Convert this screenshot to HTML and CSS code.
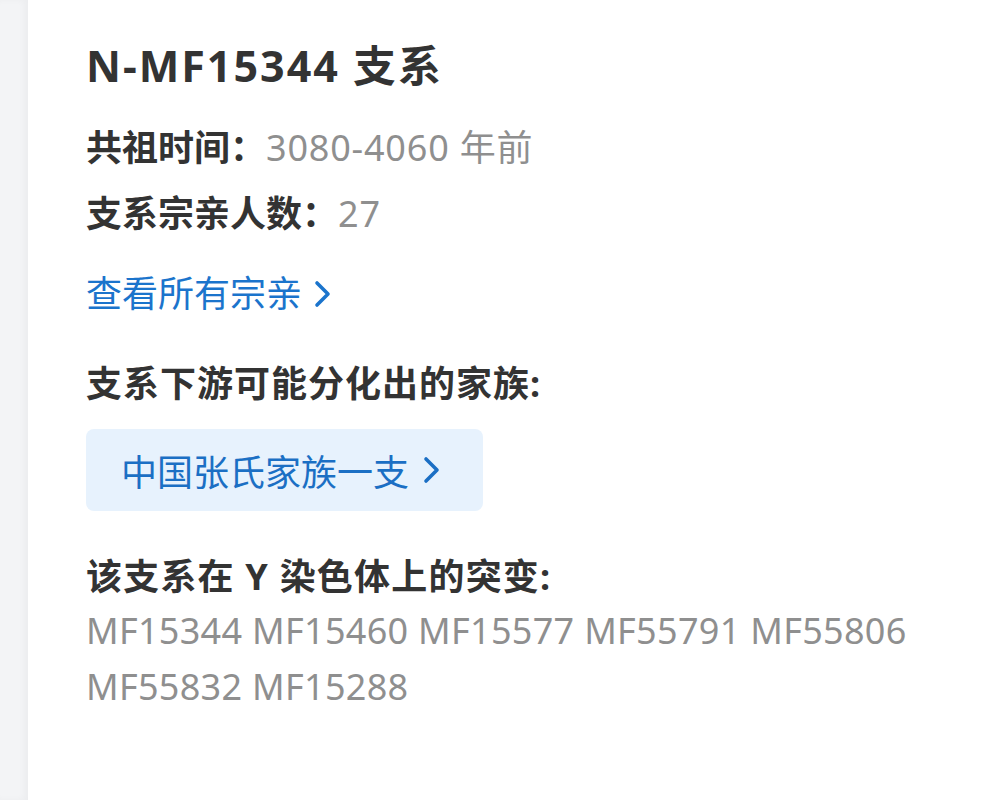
FILE: index.html
```html
<!DOCTYPE html>
<html lang="zh-CN">
<head>
    <meta charset="UTF-8">
    <meta name="viewport" content="width=device-width, initial-scale=1.0">
    <title>N-MF15344 支系</title>
    <link rel="stylesheet" href="styles.css">
</head>
<body>
    <div class="rail"></div>

    <div class="card">
        <h1 class="title">N-MF15344 支系</h1>

        <!-- Basic info -->
        <p class="row"><span class="label">共祖时间：</span><span class="value">3080-4060 年前</span></p>
        <p class="row"><span class="label">支系宗亲人数：</span><span class="value">27</span></p>

        <a class="link" href="#">查看所有宗亲
            <svg class="chevron" width="22" height="28" viewBox="0 0 22 28"><path d="M5 3 L16 14 L5 25" fill="none" stroke="currentColor" stroke-width="3.6" stroke-linecap="round" stroke-linejoin="round"/></svg>
        </a>

        <!-- Downstream families -->
        <h2 class="section-title">支系下游可能分化出的家族:</h2>
        <a class="family-btn" href="#">中国张氏家族一支
            <svg class="chevron" width="22" height="28" viewBox="0 0 22 28"><path d="M5 3 L16 14 L5 25" fill="none" stroke="currentColor" stroke-width="3.6" stroke-linecap="round" stroke-linejoin="round"/></svg>
        </a>

        <!-- Mutations -->
        <h2 class="section-title mutations-title">该支系在 Y 染色体上的突变:</h2>
        <p class="mutations">MF15344 MF15460 MF15577 MF55791 MF55806 MF55832 MF15288</p>
    </div>
</body>
</html>
```

FILE: styles.css
```css
body {
    margin: 0;
    display: flex;
    min-height: 800px;
    background-color: #ffffff;
    font-family: "Noto Sans", "Noto Sans CJK SC", sans-serif;
    color: #333333;
}
.rail {
    width: 28px;
    flex-shrink: 0;
    background-color: #f3f4f6;
    box-shadow: inset -4px 0 6px rgba(0, 0, 0, 0.03);
}
.card {
    flex: 1;
    padding: 37px 58px 0 58px;
}
.title {
    margin: 0;
    font-size: 43px;
    line-height: 58px;
    font-weight: 700;
    letter-spacing: 2px;
    color: #333333;
}
.row {
    margin: 0;
    font-size: 36px;
    line-height: 66px;
}
.row:first-of-type {
    margin-top: 20px;
}
.label {
    font-weight: 700;
    color: #333333;
}
.value {
    color: #8f8f8f;
    letter-spacing: 0.8px;
}
.link {
    display: flex;
    align-items: center;
    gap: 10px;
    margin-top: 14px;
    font-size: 36px;
    line-height: 66px;
    color: #1b74cc;
    text-decoration: none;
}
.section-title {
    margin: 24px 0 0 0;
    font-size: 36px;
    line-height: 66px;
    font-weight: 700;
    letter-spacing: 1px;
    color: #333333;
}
.family-btn {
    display: inline-flex;
    align-items: center;
    gap: 12px;
    margin-top: 12px;
    height: 82px;
    padding: 0 40px 0 35px;
    box-sizing: border-box;
    border-radius: 8px;
    background-color: #e7f2fd;
    font-size: 36px;
    color: #1b6fc4;
    text-decoration: none;
}
.mutations-title {
    margin-top: 40px;
    line-height: 52px;
    letter-spacing: 1.2px;
}
.mutations {
    margin: 0;
    width: 860px;
    font-size: 36px;
    line-height: 56px;
    letter-spacing: 0.3px;
    color: #8f8f8f;
}
```
